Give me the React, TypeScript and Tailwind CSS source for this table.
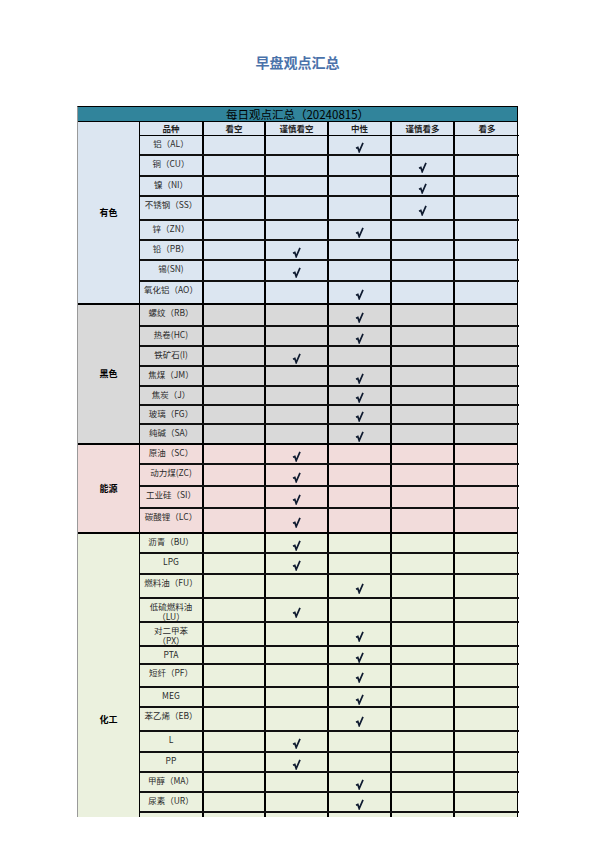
import React from "react";

type Row = { name: string; h: number; pick: number };
type Section = { label: string; bg: string; header?: boolean; rows: Row[] };

// pick: 1 看空, 2 谨慎看空, 3 中性, 4 谨慎看多, 5 看多, 0 none
const sections: Section[] = [
  {
    label: "有色",
    bg: "bg-[#dce6f1]",
    header: true,
    rows: [
      { name: "铝（AL）", h: 20, pick: 3 },
      { name: "铜（CU）", h: 21, pick: 4 },
      { name: "镍（NI）", h: 20, pick: 4 },
      { name: "不锈钢（SS）", h: 24, pick: 4 },
      { name: "锌（ZN）", h: 20, pick: 3 },
      { name: "铅（PB）", h: 20, pick: 2 },
      { name: "锡(SN)", h: 21, pick: 2 },
      { name: "氧化铝（AO）", h: 23, pick: 3 },
    ],
  },
  {
    label: "黑色",
    bg: "bg-[#d9d9d9]",
    rows: [
      { name: "螺纹（RB）", h: 22, pick: 3 },
      { name: "热卷(HC)", h: 20, pick: 3 },
      { name: "铁矿石(I)", h: 20, pick: 2 },
      { name: "焦煤（JM）", h: 20, pick: 3 },
      { name: "焦炭（J）", h: 19, pick: 3 },
      { name: "玻璃（FG）", h: 19, pick: 3 },
      { name: "纯碱（SA）", h: 20, pick: 3 },
    ],
  },
  {
    label: "能源",
    bg: "bg-[#f2dcdb]",
    rows: [
      { name: "原油（SC）", h: 20, pick: 2 },
      { name: "动力煤(ZC)", h: 22, pick: 2 },
      { name: "工业硅（SI）", h: 22, pick: 2 },
      { name: "碳酸锂（LC）", h: 25, pick: 2 },
    ],
  },
  {
    label: "化工",
    bg: "bg-[#ebf1de]",
    rows: [
      { name: "沥青（BU）", h: 20, pick: 2 },
      { name: "LPG", h: 21, pick: 2 },
      { name: "燃料油（FU）", h: 24, pick: 3 },
      { name: "低硫燃料油\n（LU）", h: 24, pick: 2 },
      { name: "对二甲苯\n（PX）", h: 24, pick: 3 },
      { name: "PTA", h: 18, pick: 3 },
      { name: "短纤（PF）", h: 23, pick: 3 },
      { name: "MEG", h: 20, pick: 3 },
      { name: "苯乙烯（EB）", h: 24, pick: 3 },
      { name: "L", h: 21, pick: 2 },
      { name: "PP", h: 20, pick: 2 },
      { name: "甲醇（MA）", h: 20, pick: 3 },
      { name: "尿素（UR）", h: 20, pick: 3 },
      // rows below run past the page edge
      { name: "PVC", h: 20, pick: 0 },
      { name: "", h: 24, pick: 0 },
      { name: "", h: 24, pick: 0 },
      { name: "", h: 26, pick: 0 },
    ],
  },
];

const headers = ["品种", "看空", "谨慎看空", "中性", "谨慎看多", "看多"];
const colW = ["w-[64px]", "w-[62px]", "w-[63px]", "w-[63px]", "w-[63px]", "w-[64px]"];

const cjk = { fontFamily: '"Noto Sans CJK SC", sans-serif' };

function Check() {
  return (
    <svg width="9" height="11" viewBox="0 0 9 11" className="mt-[4px]">
      <path d="M1 6.2 L2.8 5.4 L4.2 9.6 L8 0.8" fill="none" stroke="#0f1b30" strokeWidth="1.7" strokeLinejoin="miter" />
    </svg>
  );
}

export default function App() {
  return (
    <div className="h-[817px] overflow-hidden bg-white" style={cjk}>
      <div className="pt-[53px] text-center text-[14px] font-bold text-[#4a72aa] leading-[18px]">
        早盘观点汇总
      </div>

      <div className="mx-auto mt-[35px] w-[441px] border-t border-r border-l border-t-black border-r-black border-l-[#9a9a9a]">
        <div className="h-[15px] bg-[#31849b] border-b border-black text-center text-[11.5px] leading-[14px] text-black">
          每日观点汇总（20240815）
        </div>

        {sections.map((s, si) => (
          <div key={si} className={`flex ${s.bg} border-b-2 border-black`}>
            <div className="w-[62px] shrink-0 border-r border-black flex items-center justify-center text-[9px] font-bold text-black">
              {s.label}
            </div>
            <div className="flex-1 flex flex-col">
              {s.header && (
                <div className="flex h-[14px] border-b border-black">
                  {headers.map((h, i) => (
                    <div key={i}
                      className={`${colW[i]} shrink-0 ${i < 5 ? "border-r-2 border-black" : ""} text-center text-[8.5px] font-bold leading-[13px] text-[#222]`}>
                      {h}
                    </div>
                  ))}
                </div>
              )}
              {s.rows.map((r, ri) => (
                <div key={ri}
                  className={`flex ${ri < s.rows.length - 1 ? "border-b-2 border-[#111]" : ""}`}
                  style={{ height: r.h - (ri === s.rows.length - 1 ? 2 : 0) }}>
                  <div className={`${colW[0]} shrink-0 border-r-2 border-black text-center text-[8.5px] leading-[10px] text-[#2a2a2a] pt-[2px] whitespace-pre-line`}>
                    {r.name}
                  </div>
                  {[1, 2, 3, 4, 5].map((c) => (
                    <div key={c}
                      className={`${colW[c]} shrink-0 ${c < 5 ? "border-r-2 border-black" : ""} flex items-center justify-center`}>
                      {r.pick === c && <Check />}
                    </div>
                  ))}
                </div>
              ))}
            </div>
          </div>
        ))}
      </div>
    </div>
  );
}
